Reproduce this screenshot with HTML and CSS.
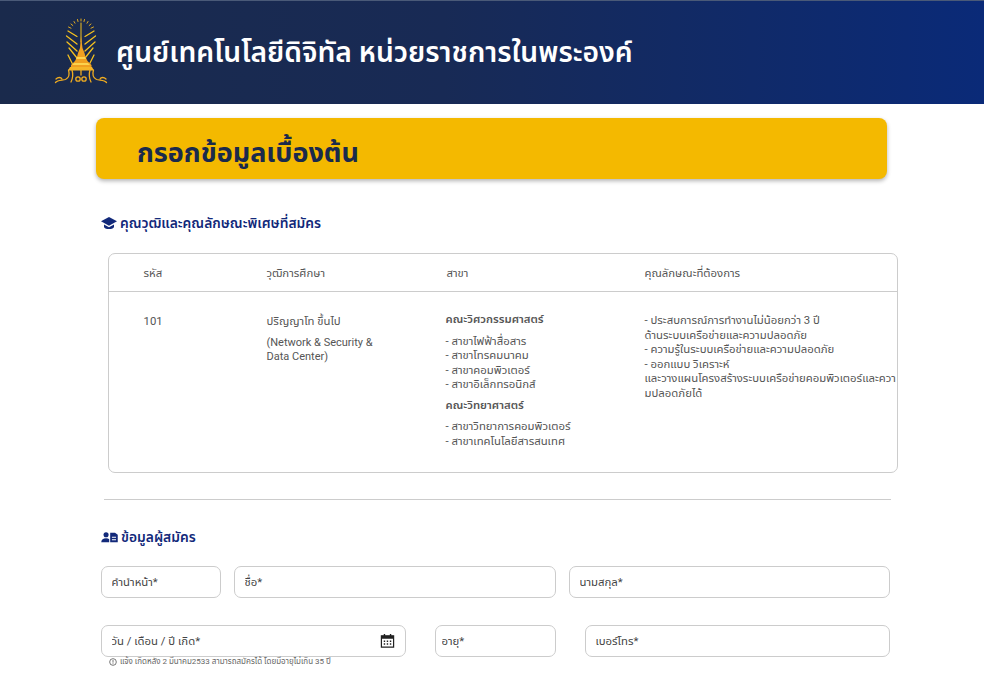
FILE: index.html
```html
<!DOCTYPE html>
<html lang="th">
<head>
<meta charset="utf-8">
<title>กรอกข้อมูลเบื้องต้น</title>
<link rel="stylesheet" href="styles.css">
</head>
<body>
<header class="site-header">
  <svg class="logo" viewBox="0 0 56 66" width="56" height="66" aria-hidden="true">
    <g stroke="#f5b81c" stroke-width=".9" fill="none" stroke-linecap="round">
      <path d="M28 1v2M24.500 1.500l.5 2M31.500 1.500l-.5 2M21 3.500l1 1.700M35 3.500l-1 1.700M18 6l1.800 1.500M38 6l-1.800 1.500M15.500 9l2.500 1.200M40.500 9l-2.500 1.200"/>
    </g>
    <g stroke="#f5c11f" stroke-width="1.300" fill="none" stroke-linecap="round">
      <path d="M15 13l9 5.500M41 13l-9 5.500M13.500 18l10.500 8M42.500 18l-10.500 8M14 24l10 9M42 24l-10 9M16 30l8 10M40 30l-8 10M15 37l5 10M41 37l-5 10"/>
      <path d="M28 5v19" stroke-width="1"/>
    </g>
    <path d="M28 18l1.500 12 2 5 1 4 2 4 4 4v2H18v-2l4-4 2-4 1-4 2-5z" fill="#f0a020"/>
    <path d="M24 39h8l1 2h-10zM21 45h14l2 2H19z" fill="#fbd24e"/>
    <path d="M17 49h22l2 3.500H15z" fill="#f5b528"/>
    <g stroke="#f0ac20" stroke-width="1.300" fill="none" stroke-linecap="round">
      <path d="M19 52c1.500 5 .5 9-1 12M37 52c-1.500 5-.5 9 1 12"/>
      <path d="M15.500 52c1.500 5 0 8-3 9.500-3 1-8 .5-10 3M40.500 52c-1.500 5 0 8 3 9.500 3 1 8 .5 10 3"/>
      <path d="M3 61c2-2 5-2 6 0M53 61c-2-2-5-2-6 0"/>
      <circle cx="25" cy="61" r="2.200"/><circle cx="31" cy="61" r="2.200"/>
      <path d="M28 52v5"/>
    </g>
  </svg>
  <h1 class="site-title">ศูนย์เทคโนโลยีดิจิทัล หน่วยราชการในพระองค์</h1>
</header>

<main class="page">
  <div class="banner"><h2 class="banner-title">กรอกข้อมูลเบื้องต้น</h2></div>

  <h3 class="section-title section-title-qual">
    <svg class="section-icon" viewBox="0 0 24 24" width="16" height="16" aria-hidden="true"><path d="M12 3 0 9.500l12 6.500 12-6.500z"/><path d="M4.500 14.200v3.300c0 1.900 3.400 3.500 7.500 3.500s7.500-1.600 7.500-3.500v-3.300L12 18.300z"/></svg>
    คุณวุฒิและคุณลักษณะพิเศษที่สมัคร
  </h3>

  <section class="job-table">
    <div class="job-row job-head">
      <div>รหัส</div>
      <div class="head-qual">วุฒิการศึกษา</div>
      <div class="head-branch">สาขา</div>
      <div>คุณลักษณะที่ต้องการ</div>
    </div>
    <div class="job-row job-body">
      <div class="cell-code">101</div>
      <div class="cell-qual">
        <p class="qual-main">ปริญญาโท ขึ้นไป</p>
        <p class="qual-note">(Network &amp; Security &amp;<br>Data Center)</p>
      </div>
      <div class="cell-branch">
        <p class="faculty">คณะวิศวกรรมศาสตร์</p>
        <p class="branch-list">- สาขาไฟฟ้าสื่อสาร<br>- สาขาโทรคมนาคม<br>- สาขาคอมพิวเตอร์<br>- สาขาอิเล็กทรอนิกส์</p>
        <p class="faculty faculty-second">คณะวิทยาศาสตร์</p>
        <p class="branch-list">- สาขาวิทยาการคอมพิวเตอร์<br>- สาขาเทคโนโลยีสารสนเทศ</p>
      </div>
      <div class="cell-spec">- ประสบการณ์การทำงานไม่น้อยกว่า 3 ปี<br>ด้านระบบเครือข่ายและความปลอดภัย<br>- ความรู้ในระบบเครือข่ายและความปลอดภัย<br>- ออกแบบ วิเคราะห์<br>และวางแผนโครงสร้างระบบเครือข่ายคอมพิวเตอร์และควา<br>มปลอดภัยได้</div>
    </div>
  </section>

  <hr class="divider">

  <h3 class="section-title section-title-person">
    <svg class="section-icon" viewBox="0 0 24 16" width="17" height="11" aria-hidden="true"><circle cx="7" cy="4" r="3.700"/><path d="M0 15c0-4 3-6 7-6 2 0 3.500.5 4.500 1.500V15z"/><path fill-rule="evenodd" d="M13 1h7l4 3v11H13zm2.500 6v1.500h6V7zm0 3.500V12h6v-1.500z"/></svg>
    ข้อมูลผู้สมัคร
  </h3>

  <form class="form">
    <div class="form-row form-row-name">
      <input class="field" type="text" placeholder="คำนำหน้า*">
      <input class="field" type="text" placeholder="ชื่อ*">
      <input class="field" type="text" placeholder="นามสกุล*">
    </div>
    <div class="form-row form-row-birth">
      <div class="date-wrap">
        <input class="field" type="text" placeholder="วัน / เดือน / ปี เกิด*">
        <svg class="date-icon" viewBox="0 0 16 16" width="15" height="15" aria-hidden="true"><path d="M1.500 3h13v12h-13z" fill="none" stroke="#222" stroke-width="1.300"/><path d="M1.500 3h13v3h-13zM4 1h1.500v3H4zM10.500 1H12v3h-1.500z" fill="#222"/><path d="M4 8h1.500v1.500H4zM7.200 8h1.500v1.500H7.200zM10.500 8H12v1.500h-1.500zM4 11h1.500v1.500H4zM7.200 11h1.500v1.500H7.200zM10.500 11H12v1.500h-1.500z" fill="#222"/></svg>
        <p class="hint">
          <svg viewBox="0 0 12 12" width="8" height="8" aria-hidden="true"><circle cx="6" cy="6" r="5" fill="none" stroke="#555" stroke-width="1.200"/><path d="M6 3v4M6 8v1.200" stroke="#555" stroke-width="1.200"/></svg>
          แจ้ง เกิดหลัง 2 มีนาคม2533 สามารถสมัครได้ โดยมีอายุไม่เกิน 35 ปี
        </p>
      </div>
      <input class="field field-age" type="text" placeholder="อายุ*">
      <input class="field" type="text" placeholder="เบอร์โทร*">
    </div>
  </form>
</main>
</body>
</html>
```
FILE: styles.css
```css
* { box-sizing: border-box; }
html, body { margin: 0; height: 673px; overflow: hidden; }
body {
  background: #fff;
  color: #555;
  font-family: Roboto, "Noto Sans Thai", "Liberation Sans", sans-serif;
  font-size: 11.350px;
}
p, h1, h2, h3 { margin: 0; }

.site-header {
  height: 104px;
  display: flex;
  align-items: center;
  gap: 7px;
  padding: 1px 0 0 53px;
  border-top: 1px solid #4a5a78;
  background: linear-gradient(90deg, #1a2a4c 0%, #182a55 45%, #0a2a78 100%);
}
.logo { flex: none; margin-top: -4px; }
.site-title { color: #fff; font-size: 28.200px; font-weight: 600; line-height: 1.2; }

.page { padding: 14px 0 0 96px; width: 900px; }
.banner {
  width: 791px;
  height: 61px;
  display: flex;
  align-items: center;
  padding: 9px 0 0 41px;
  background: #f4b900;
  border-radius: 8px;
  box-shadow: 0 2px 4px rgba(0, 0, 0, .3);
}
.banner-title { color: #1a2a4c; font-size: 27px; font-weight: 700; }

.section-title {
  display: flex;
  align-items: center;
  gap: 3px;
  color: #12297a;
  font-size: 13.800px;
  font-weight: 600;
  line-height: 20px;
  margin-left: 5px;
}
.section-title-qual { margin-top: 34px; }
.section-title-person { margin-top: 27px; }
.section-icon { fill: #12297a; flex: none; }

.job-table {
  margin: 20px 0 0 11.500px;
  width: 790px;
  height: 220px;
  border: 1px solid #ccc;
  border-radius: 7px;
}
.job-row {
  display: grid;
  grid-template-columns: 123px 179px 199px 1fr;
  padding-left: 35px;
}
.job-head { height: 38px; align-items: center; padding-top: 2px; border-bottom: 1px solid #ccc; }
.head-branch { padding-left: 1px; }
.job-body { padding-top: 22px; line-height: 14.500px; }
.qual-main { margin-bottom: 7px; }
.qual-note { font-size: 11px; }
.faculty { font-weight: 600; margin: -2px 0 7px; }
.faculty-second { margin: 6px 0 7px; }
.cell-spec { white-space: nowrap; margin-top: -1px; }

.divider { margin: 26px 0 0 8px; width: 787px; border: 0; border-top: 1px solid #ccc; }

.form { margin: 19px 0 0 5px; width: 789px; }
.form-row { display: grid; }
.form-row-name { grid-template-columns: 120px 322px 321px; gap: 13px; }
.form-row-birth { grid-template-columns: 305px 121px 305px; gap: 28px; margin-top: 27px; }
.field {
  width: 100%;
  height: 32px;
  padding: 0 9.500px;
  border: 1px solid #ccc;
  border-radius: 7px;
  background: #fff;
  font: inherit;
  outline: none;
}
.form-row-birth > .field-age { margin-left: 1px; }
.form-row-birth > .field:last-child { margin-left: 2px; }
.field::placeholder { color: #444; opacity: 1; }
.field-age { padding-left: 5.500px; }
.date-wrap { position: relative; }
.date-icon { position: absolute; right: 11px; top: 8px; }
.hint {
  display: flex;
  align-items: center;
  gap: 3px;
  margin: -1px 0 0 8px;
  font-size: 8px;
  line-height: 11px;
  color: #666;
}
```
